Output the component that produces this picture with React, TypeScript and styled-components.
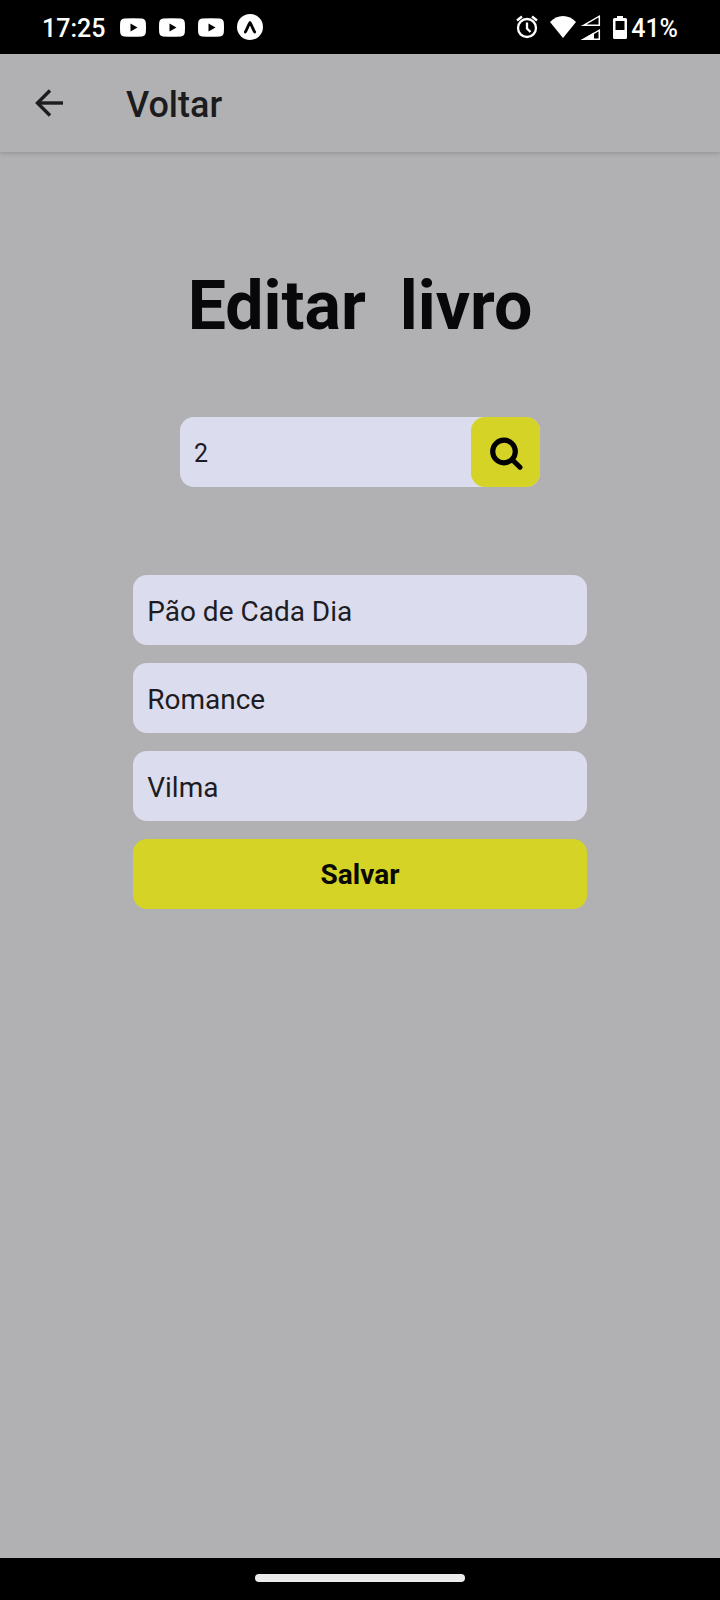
import React, { useState } from "react";
import styled, { createGlobalStyle } from "styled-components";

const GlobalStyle = createGlobalStyle`
  *, *::before, *::after { box-sizing: border-box; }
  body { margin: 0; background: #b1b1b3; font-family: Roboto, "Liberation Sans", sans-serif; }
  button, input { font: inherit; border: 0; margin: 0; }
`;

const Screen = styled.div`
  display: flex;
  flex-direction: column;
  min-height: 100vh;
  background: #b1b1b3;
`;

const StatusBar = styled.div`
  display: flex;
  align-items: center;
  justify-content: space-between;
  height: 54px;
  padding: 0 42px;
  background: #000;
  color: #fff;
`;

const StatusGroup = styled.div<{ $gap: number }>`
  display: flex;
  align-items: center;
  gap: ${(p) => p.$gap}px;

  svg { display: block; }
`;

const StatusText = styled.span`
  padding-top: 3px;
  font-size: 25px;
  line-height: 28px;
  font-weight: 500;
`;

const Header = styled.header`
  display: flex;
  align-items: center;
  gap: 48px;
  height: 98px;
  padding: 0 20px;
  color: #1c1c1e;
  box-shadow: 0 1px 5px rgba(0, 0, 0, 0.2);
`;

const BackButton = styled.button`
  display: flex;
  align-items: center;
  justify-content: center;
  width: 58px;
  height: 58px;
  padding: 0;
  background: none;
  color: inherit;
`;

const HeaderTitle = styled.span`
  padding-top: 3px;
  font-size: 36px;
  line-height: 42px;
  font-weight: 500;
`;

const Main = styled.main`
  flex: 1;
  display: flex;
  flex-direction: column;
  align-items: center;
  padding-top: 114px;
`;

const Title = styled.h1`
  margin: 0;
  font-size: 68px;
  line-height: 80px;
  font-weight: 700;
  color: #08080a;
  white-space: pre;
`;

const SearchForm = styled.form`
  display: flex;
  width: 50%;
  margin-top: 71px;
  border-radius: 14px;
  background: #dcdcef;
`;

const SearchInput = styled.input`
  flex: 1;
  min-width: 0;
  height: 70px;
  padding: 2px 14px 0;
  border-radius: 14px;
  background: transparent;
  color: #1c1c22;
  font-size: 25px;
  outline: none;
`;

const SearchButton = styled.button`
  display: flex;
  align-items: center;
  justify-content: center;
  width: 69px;
  height: 70px;
  padding: 4px 0 0;
  border-radius: 14px;
  background: #d4d326;
  color: #000;
`;

const BookForm = styled.form`
  display: flex;
  flex-direction: column;
  gap: 18px;
  width: 63%;
  margin-top: 88px;
`;

const Field = styled.input`
  width: 100%;
  height: 70px;
  padding: 2px 14px 0;
  border-radius: 14px;
  background: #dcdcef;
  color: #1c1c22;
  font-size: 28px;
  outline: none;
`;

const SaveButton = styled.button`
  height: 70px;
  padding: 0;
  border-radius: 14px;
  background: #d4d326;
  color: #0a0a04;
  font-size: 28px;
  font-weight: 700;
`;

const NavigationBar = styled.div`
  display: flex;
  justify-content: center;
  height: 42px;
  padding-top: 16px;
  background: #000;
`;

const HomeHandle = styled.div`
  width: 210px;
  height: 8px;
  border-radius: 4px;
  background: #ebebeb;
`;

const VideoIcon = () => (
  <svg width="26" height="19" viewBox="0 0 26 19" aria-hidden="true">
    <path
      fill="#fff"
      fillRule="evenodd"
      d="M4 .5Q13-.2 22 .5Q25.500 .9 25.800 4.500Q26.200 9.500 25.800 14.500Q25.500 18.100 22 18.500Q13 19.200 4 18.500Q.5 18.100 .2 14.500Q-.2 9.500 .2 4.500Q.5.900 4 .5ZM10.500 5.500V13.500L17.500 9.500Z"
    />
  </svg>
);

const ExpoIcon = () => (
  <svg width="26" height="26" viewBox="0 0 26 26" aria-hidden="true">
    <circle cx="13" cy="13" r="13" fill="#fff" />
    <path
      d="M8.300 18C10 15.500 11.500 10.500 13 8.500C14.500 10.500 16 15.500 17.700 18"
      fill="none"
      stroke="#000"
      strokeWidth="2.800"
      strokeLinecap="round"
      strokeLinejoin="round"
    />
  </svg>
);

const AlarmIcon = () => (
  <svg width="22" height="24" viewBox="0 0 22 24" fill="none" stroke="#fff" aria-hidden="true">
    <circle cx="11" cy="13" r="9" strokeWidth="2.300" />
    <path d="M11 7.500V13.500L14.500 17" strokeWidth="2.300" />
    <path d="M1 5.500L6 1.500M16 1.500L21 5.500" strokeWidth="2.400" />
  </svg>
);

const WifiIcon = () => (
  <svg width="26" height="22" viewBox="0 0 26 22" aria-hidden="true">
    <path d="M0 6Q5.500 0 13 0T26 6L13 22Z" fill="#fff" />
  </svg>
);

const SignalIcon = () => (
  <svg width="21" height="27" viewBox="0 0 21 27" aria-hidden="true">
    <path d="M3.500 11.300L19.300 2.200V11.300Z" fill="none" stroke="#fff" strokeWidth="1.500" />
    <path d="M3.500 25.300L19.300 16.200V25.300Z" fill="none" stroke="#fff" strokeWidth="1.500" />
    <path d="M1 26L14 18.500V26Z" fill="#fff" />
  </svg>
);

const BatteryIcon = () => (
  <svg width="14" height="23" viewBox="0 0 14 23" aria-hidden="true">
    <path
      fill="#fff"
      fillRule="evenodd"
      d="M4 0H10V2H12.500Q14 2 14 3.500V21.500Q14 23 12.500 23H1.500Q0 23 0 21.500V3.500Q0 2 1.500 2H4ZM2.500 5V14H11.500V5Z"
    />
  </svg>
);

const BackIcon = () => (
  <svg width="30" height="30" viewBox="0 0 30 30" fill="none" stroke="currentColor" strokeWidth="3.400" aria-hidden="true">
    <path d="M29 15H4" />
    <path d="M16 2.500L3.500 15L16 27.500" />
  </svg>
);

const SearchIcon = () => (
  <svg width="34" height="34" viewBox="0 0 34 34" fill="none" stroke="currentColor" aria-hidden="true">
    <circle cx="15" cy="14.500" r="11.300" strokeWidth="5.200" />
    <path d="M23 22.500L31 30.300" strokeWidth="5" strokeLinecap="round" />
  </svg>
);

export default function App() {
  const [code, setCode] = useState("2");
  const [book, setBook] = useState({ title: "Pão de Cada Dia", genre: "Romance", author: "Vilma" });

  const update = (key: keyof typeof book) => (e: React.ChangeEvent<HTMLInputElement>) =>
    setBook({ ...book, [key]: e.target.value });

  return (
    <Screen>
      <GlobalStyle />
      <StatusBar>
        <StatusGroup $gap={15}>
          <StatusText>17:25</StatusText>
          <StatusGroup $gap={13}>
            <VideoIcon />
            <VideoIcon />
            <VideoIcon />
            <ExpoIcon />
          </StatusGroup>
        </StatusGroup>
        <StatusGroup $gap={12}>
          <AlarmIcon />
          <StatusGroup $gap={4}>
            <WifiIcon />
            <SignalIcon />
          </StatusGroup>
          <StatusGroup $gap={4}>
            <BatteryIcon />
            <StatusText>41%</StatusText>
          </StatusGroup>
        </StatusGroup>
      </StatusBar>
      <Header>
        <BackButton type="button" aria-label="Voltar">
          <BackIcon />
        </BackButton>
        <HeaderTitle>Voltar</HeaderTitle>
      </Header>
      <Main>
        <Title>{"Editar  livro"}</Title>
        <SearchForm onSubmit={(e) => e.preventDefault()}>
          <SearchInput aria-label="Código" value={code} onChange={(e) => setCode(e.target.value)} />
          <SearchButton type="submit" aria-label="Buscar">
            <SearchIcon />
          </SearchButton>
        </SearchForm>
        <BookForm onSubmit={(e) => e.preventDefault()}>
          <Field aria-label="Título" value={book.title} onChange={update("title")} />
          <Field aria-label="Gênero" value={book.genre} onChange={update("genre")} />
          <Field aria-label="Autor" value={book.author} onChange={update("author")} />
          <SaveButton type="submit">Salvar</SaveButton>
        </BookForm>
      </Main>
      <NavigationBar>
        <HomeHandle />
      </NavigationBar>
    </Screen>
  );
}
